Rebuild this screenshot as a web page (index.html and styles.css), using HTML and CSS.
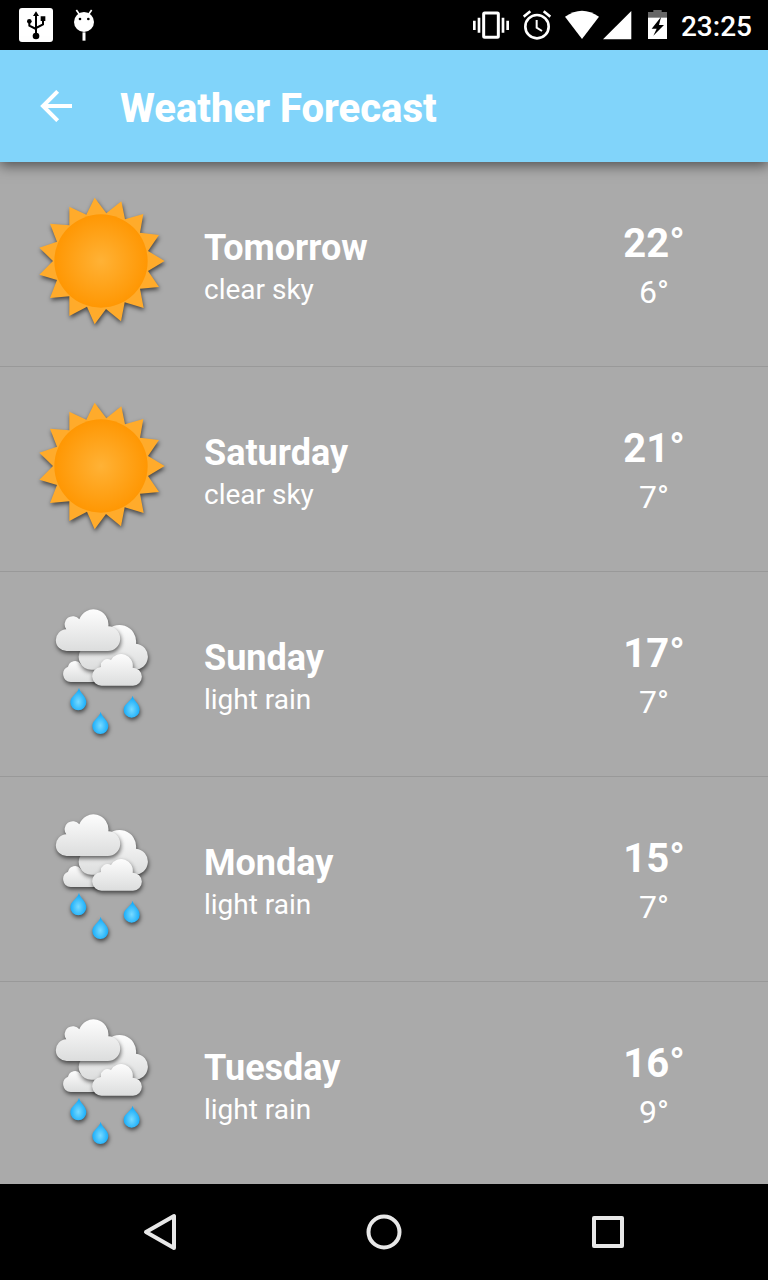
FILE: index.html
```html
<!DOCTYPE html>
<html lang="en">
<head>
<meta charset="utf-8">
<meta name="viewport" content="width=device-width, initial-scale=1">
<title>Weather Forecast</title>
<link rel="stylesheet" href="styles.css">
</head>
<body>
<svg class="defs" aria-hidden="true">
  <defs>
    <radialGradient id="disk"><stop offset="0" stop-color="#ffb236"/><stop offset="1" stop-color="#ff9703"/></radialGradient>
    <linearGradient id="cloud" x1="0" y1="0" x2="0" y2="1"><stop offset="0" stop-color="#fdfdfd"/><stop offset="1" stop-color="#dcdddd"/></linearGradient>
    <radialGradient id="drop" cx=".5" cy=".62" r=".5"><stop offset="0" stop-color="#78daff"/><stop offset="1" stop-color="#18adfa"/></radialGradient>
    <symbol id="sun" viewBox="51 51 384 384" overflow="visible">
      <path class="shade" fill="#ffab2b" d="M434 243 L384 273 L417 321 L360 326 L371 384 L314 367 L303 424 L258 387 L224 433 L201 380 L148 408 L148 349 L90 354 L111 300 L58 284 L99 243 L58 203 L111 185 L90 131 L148 136 L148 80 L199 104 L224 53 L259 100 L304 64 L315 118 L370 102 L360 158 L417 165 L384 213 Z"/>
      <circle cx="243" cy="243" r="140" fill="url(#disk)"/>
    </symbol>
    <symbol id="rain" viewBox="-9 36 384 384" overflow="visible">
      <g fill="url(#cloud)">
        <path class="shade" d="M92 261 A24 24 0 0 1 84 215 A22 22 0 0 1 122 206 L180 220 V261 Z"/>
        <path class="shade" d="M155 224 A38 38 0 0 1 125 162 L195 115 A50 50 0 0 1 288 146 A39 39 0 0 1 281 224 Z"/>
        <path class="shade" d="M81 168 A32 32 0 0 1 79 103 A23 23 0 0 1 118 73 A45 45 0 0 1 205 94 A37 37 0 0 1 202 168 Z"/>
        <path class="shade" d="M186 272 A28 28 0 0 1 183 216 A20 20 0 0 1 213 195 A35 35 0 0 1 278 218 A27 27 0 0 1 279 272 Z"/>
      </g>
      <g fill="url(#drop)">
        <path class="shade" d="M117 278 C120 295 139 303 139 322 A24 24 0 0 1 91 322 C91 303 113 297 117 278 Z"/>
        <path class="shade" d="M182 350 C185 367 205 375 205 393 A24 24 0 0 1 157 393 C157 375 179 367 182 350 Z"/>
        <path class="shade" d="M278 302 C281 318 299 326 299 344 A24 24 0 0 1 251 344 C251 326 274 319 278 302 Z"/>
      </g>
    </symbol>
  </defs>
</svg>

<div class="statusbar">
  <svg width="34" height="34" viewBox="57 24 102 102" aria-label="USB connected">
    <rect x="57" y="24" width="102" height="102" rx="9" fill="#fff"/>
    <g fill="none" stroke="#000" stroke-width="6"><path d="M108 108V44M108 87L88 77V64M108 84L129 73V58"/></g>
    <path d="M108 34L117 48H99ZM122 49H136V63H122Z"/><circle cx="88" cy="64" r="7"/><circle cx="108" cy="108" r="10"/>
  </svg>
  <svg width="20" height="32" viewBox="222 28 60 96" aria-label="USB debugging">
    <circle cx="252" cy="67" r="30" fill="#fff"/><path d="M229 31L238 44M275 31L266 44" stroke="#fff" stroke-width="5"/>
    <path d="M252 98V123" stroke="#fff" stroke-width="9"/><circle cx="240" cy="58" r="4"/><circle cx="265" cy="58" r="4"/>
  </svg>
  <div class="statusbar-right">
    <svg width="36" height="28" viewBox="39 33 108 84" aria-label="Vibrate">
      <rect x="71" y="39" width="44" height="73" rx="3" fill="none" stroke="#fff" stroke-width="9"/>
      <path d="M43 62V90M57 53V98M129 53V98M143 62V90" stroke="#fff" stroke-width="8"/>
    </svg>
    <svg class="after-vibrate" width="28" height="30" viewBox="189 30 84 90" aria-label="Alarm">
      <circle cx="231" cy="80" r="35" fill="none" stroke="#fff" stroke-width="8"/>
      <path d="M230 60V83L246 93" fill="none" stroke="#fff" stroke-width="6"/><path d="M191 50L211 34M271 50L251 34" stroke="#fff" stroke-width="8"/>
    </svg>
    <svg class="after-alarm" width="34" height="30" viewBox="315 30 102 90" aria-label="Wi-Fi"><path fill="#fff" d="M315 50Q366 14 417 50L366 117Z"/></svg>
    <svg class="after-wifi" width="29" height="30" viewBox="429 30 87 90" aria-label="Signal"><path fill="#fff" d="M429 118L514 33V118Z"/></svg>
    <svg class="after-signal" width="19" height="30" viewBox="564 30 57 90" aria-label="Battery charging">
      <path fill="#666" d="M564 36H580V30H605V36H621V54H564Z"/><path fill="#fff" d="M564 53H621V117H564Z"/>
      <path d="M603 51L575 86H590L580 107L612 75H597Z"/>
    </svg>
    <time class="clock">23:25</time>
  </div>
</div>

<header class="appbar">
  <button class="back" aria-label="Navigate up"><svg width="32" height="32" viewBox="60 60 96 96"><path d="M156 108H70M113 64L69 108L113 152" fill="none" stroke="#fff" stroke-width="12"/></svg></button>
  <h1 class="title">Weather Forecast</h1>
</header>

<main class="content">
  <ul class="forecast">
    <li class="day"><svg class="icon"><use href="#sun"/></svg><div class="info"><h2 class="name">Tomorrow</h2><p class="sky">clear sky</p></div><div class="temps"><p class="high">22°</p><p class="low">6°</p></div></li>
    <li class="day"><svg class="icon"><use href="#sun"/></svg><div class="info"><h2 class="name">Saturday</h2><p class="sky">clear sky</p></div><div class="temps"><p class="high">21°</p><p class="low">7°</p></div></li>
    <li class="day"><svg class="icon"><use href="#rain"/></svg><div class="info"><h2 class="name">Sunday</h2><p class="sky">light rain</p></div><div class="temps"><p class="high">17°</p><p class="low">7°</p></div></li>
    <li class="day"><svg class="icon"><use href="#rain"/></svg><div class="info"><h2 class="name">Monday</h2><p class="sky">light rain</p></div><div class="temps"><p class="high">15°</p><p class="low">7°</p></div></li>
    <li class="day"><svg class="icon"><use href="#rain"/></svg><div class="info"><h2 class="name">Tuesday</h2><p class="sky">light rain</p></div><div class="temps"><p class="high">16°</p><p class="low">9°</p></div></li>
  </ul>
</main>

<nav class="navbar" aria-label="System">
  <button aria-label="Back"><svg width="40" height="40" viewBox="0 0 40 40"><path d="M34 4V36L6 20Z"/></svg></button>
  <button aria-label="Home"><svg width="40" height="40" viewBox="0 0 40 40"><circle cx="20" cy="20" r="15.500"/></svg></button>
  <button aria-label="Overview"><svg width="40" height="40" viewBox="0 0 40 40"><rect x="6" y="6" width="28" height="28"/></svg></button>
</nav>
</body>
</html>
```
FILE: styles.css
```css
* {
  box-sizing: border-box;
  margin: 0;
  padding: 0;
}

body {
  display: flex;
  flex-direction: column;
  height: 100vh;
  background: #aaa;
  color: #fff;
  font-family: Roboto, "Liberation Sans", sans-serif;
}

button {
  display: flex;
  align-items: center;
  justify-content: center;
  border: 0;
  background: none;
}

svg {
  display: block;
  flex: none;
}

.defs {
  position: absolute;
  width: 0;
  height: 0;
}

.shade {
  filter: drop-shadow(2px 7px 6px rgba(0, 0, 0, 0.6));
}

.statusbar {
  display: flex;
  flex: none;
  align-items: center;
  gap: 21px;
  height: 50px;
  padding: 0 16px 0 19px;
  background: #000;
}

.statusbar-right {
  display: flex;
  align-items: center;
  margin-left: auto;
}

.after-vibrate,
.after-alarm {
  margin-left: 14px;
}

.after-wifi {
  margin-left: 4px;
}

.after-signal {
  margin-left: 16px;
}

.clock {
  margin-left: 14px;
  padding-top: 3px;
  font-size: 28px;
  font-weight: 500;
  line-height: 32px;
}

.appbar {
  position: relative;
  display: flex;
  flex: none;
  align-items: center;
  gap: 48px;
  height: 112px;
  padding: 0 40px;
  background: #81d4fa;
  box-shadow: 0 4px 12px rgba(0, 0, 0, 0.5);
}

.title {
  padding-top: 6px;
  font-size: 40px;
  font-weight: 800;
  line-height: 48px;
}

.content {
  flex: 1;
  min-height: 0;
  overflow: hidden;
}

.forecast {
  list-style: none;
}

.day {
  display: flex;
  align-items: center;
  height: 205px;
  padding: 0 32px 6px 37px;
  border-bottom: 1px solid #999;
}

.icon {
  width: 128px;
  height: 128px;
  overflow: visible;
}

.info {
  flex: 1;
  margin-left: 39px;
  padding-top: 13px;
}

.name {
  font-size: 36px;
  font-weight: 700;
  line-height: 44px;
}

.sky {
  font-size: 28px;
  line-height: 40px;
}

.temps {
  width: 164px;
  padding-top: 14px;
  text-align: center;
}

.high {
  font-size: 40px;
  font-weight: 700;
  line-height: 48px;
}

.low {
  font-size: 32px;
  font-weight: 400;
  line-height: 48px;
}

.navbar {
  display: flex;
  flex: none;
  height: 96px;
  padding: 0 48px;
  background: #000;
}

.navbar button {
  flex: 1;
}

.navbar svg {
  fill: none;
  stroke: #e8e8e8;
  stroke-width: 4;
  stroke-linejoin: round;
}
```
